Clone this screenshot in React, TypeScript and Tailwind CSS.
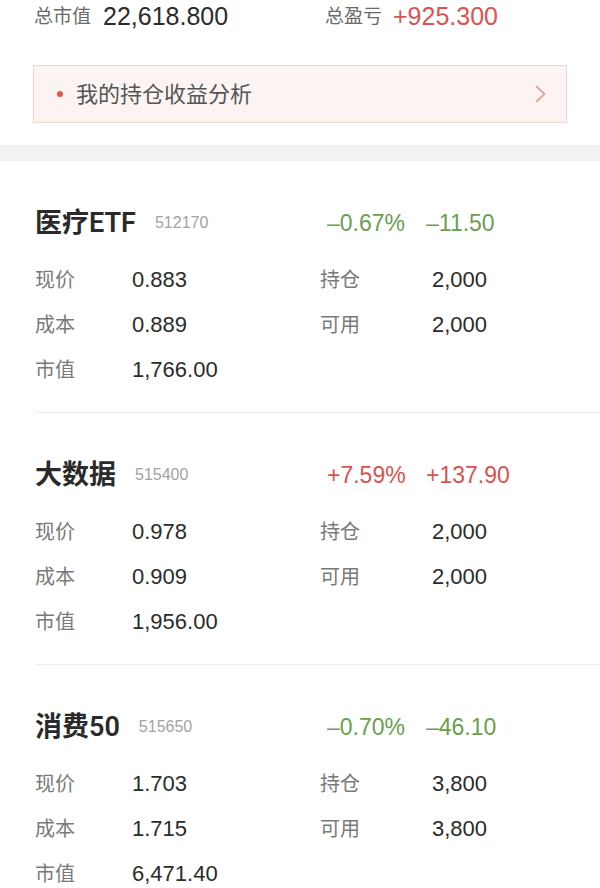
import React from 'react';

interface Holding {
    name: string;
    code: string;
    pct: string;
    amount: string;
    up: boolean;
    price: string;
    cost: string;
    value: string;
    hold: string;
    avail: string;
}

const holdings: Holding[] = [
    { name: '医疗ETF', code: '512170', pct: '–0.67%', amount: '–11.50', up: false, price: '0.883', cost: '0.889', value: '1,766.00', hold: '2,000', avail: '2,000' },
    { name: '大数据', code: '515400', pct: '+7.59%', amount: '+137.90', up: true, price: '0.978', cost: '0.909', value: '1,956.00', hold: '2,000', avail: '2,000' },
    { name: '消费50', code: '515650', pct: '–0.70%', amount: '–46.10', up: false, price: '1.703', cost: '1.715', value: '6,471.40', hold: '3,800', avail: '3,800' },
];

const Cell: React.FC<{ label: string; value: string; labelWidth: string }> = ({ label, value, labelWidth }) => (
    <div className="flex items-center">
        <span className={`${labelWidth} text-[20px] text-[#7a7a7a]`}>{label}</span>
        <span className="text-[22px] text-[#2b2b2b]">{value}</span>
    </div>
);

const HoldingCard: React.FC<{ item: Holding }> = ({ item }) => {
    const color = item.up ? 'text-[#d9534f]' : 'text-[#6b9e4f]';
    return (
        <div className="ml-[35px] pt-[42px] pb-[20px] border-b border-[#ececec]">
            <div className="flex items-center h-[40px]">
                <div className="w-[292px] flex items-center">
                    <span className="text-[27px] font-semibold text-[#2a2a2a] font-['Roboto','Noto_Sans_CJK_SC',sans-serif]">{item.name}</span>
                    <span className="ml-[19px] text-[16px] text-[#a3a3a3]">{item.code}</span>
                </div>
                <span className={`w-[99px] text-[23px] ${color}`}>{item.pct}</span>
                <span className={`text-[23px] ${color}`}>{item.amount}</span>
            </div>
            <div className="mt-[14px]">
                <div className="flex h-[45px] items-center">
                    <div className="w-[285px]"><Cell label="现价" value={item.price} labelWidth="w-[97px]" /></div>
                    <Cell label="持仓" value={item.hold} labelWidth="w-[112px]" />
                </div>
                <div className="flex h-[45px] items-center">
                    <div className="w-[285px]"><Cell label="成本" value={item.cost} labelWidth="w-[97px]" /></div>
                    <Cell label="可用" value={item.avail} labelWidth="w-[112px]" />
                </div>
                <div className="flex h-[45px] items-center">
                    <Cell label="市值" value={item.value} labelWidth="w-[97px]" />
                </div>
            </div>
        </div>
    );
};

const App: React.FC = () => {
    return (
        <div className="w-[600px] h-[888px] overflow-hidden bg-white font-['Liberation_Sans','Noto_Sans_CJK_SC',sans-serif]">
            <div className="flex items-center h-[34px] px-[34px]">
                <div className="w-[291px] flex items-center gap-[12px]">
                    <span className="text-[19px] text-[#6a6a6a]">总市值</span>
                    <span className="text-[25px] text-[#2b2b2b]">22,618.800</span>
                </div>
                <div className="flex items-center gap-[11px]">
                    <span className="text-[19px] text-[#6a6a6a]">总盈亏</span>
                    <span className="text-[25px] text-[#dc5252]">+925.300</span>
                </div>
            </div>

            <div className="mx-[33px] mt-[31px] h-[58px] flex items-center border border-[#f0d7d3] bg-[#fbf4f2] pl-[23px] pr-[19px]">
                <span className="w-[6px] h-[6px] rounded-full bg-[#e0554d]" />
                <span className="ml-[13px] text-[22px] text-[#555]">我的持仓收益分析</span>
                <svg className="ml-auto" width="13" height="20" viewBox="0 0 13 20" fill="none">
                    <path d="M2.5 2.5l8 7.5-8 7.5" stroke="#e3a5a3" strokeWidth="1.8" strokeLinecap="round" strokeLinejoin="round" />
                </svg>
            </div>

            <div className="mt-[22px] h-[16px] bg-[#f2f2f2]" />

            {holdings.map((h) => (
                <HoldingCard key={h.code} item={h} />
            ))}
        </div>
    );
};

export default App;
